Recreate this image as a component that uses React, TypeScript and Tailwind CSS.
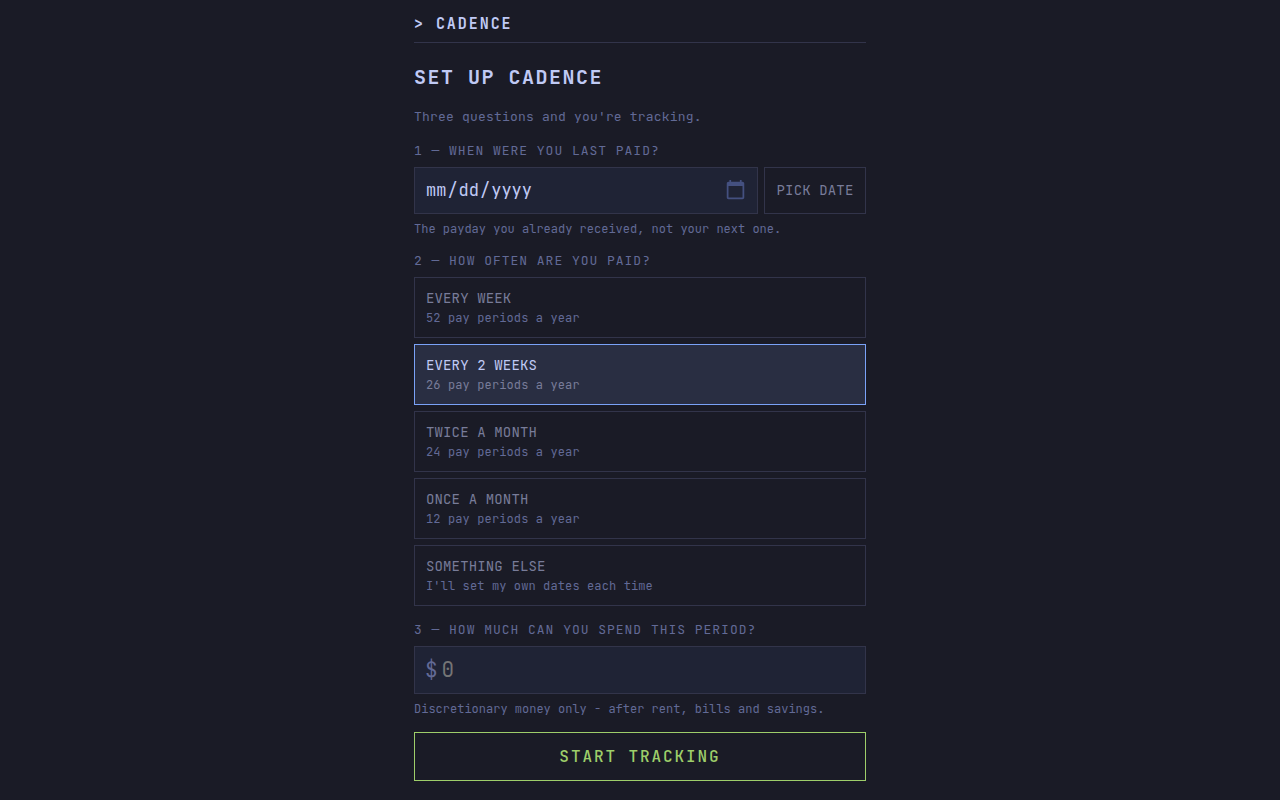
import React, { useState } from "react"

const frequencies = [
  { id: "weekly", title: "EVERY WEEK", note: "52 pay periods a year" },
  { id: "biweekly", title: "EVERY 2 WEEKS", note: "26 pay periods a year" },
  { id: "semimonthly", title: "TWICE A MONTH", note: "24 pay periods a year" },
  { id: "monthly", title: "ONCE A MONTH", note: "12 pay periods a year" },
  { id: "custom", title: "SOMETHING ELSE", note: "I'll set my own dates each time" },
]

const labelClass = "block text-[13px] leading-[17px] tracking-[0.075em] text-[#626a96]"
const hintClass = "mt-[7px] text-[12px] leading-4 text-[#626a96]"

function CalendarIcon() {
  return (
    <svg
      viewBox="0 0 24 24"
      className="pointer-events-none absolute right-3 top-3 size-[21px] text-[#445080]"
      aria-hidden="true"
    >
      <path
        fill="currentColor"
        d="M20 3h-1V1h-2v2H7V1H5v2H4c-1.1 0-2 .9-2 2v16c0 1.1.9 2 2 2h16c1.1 0 2-.9 2-2V5c0-1.1-.9-2-2-2zm0 18H4V8h16v13z"
      />
    </svg>
  )
}

export default function App() {
  const [payday, setPayday] = useState("")
  const [frequency, setFrequency] = useState("biweekly")
  const [amount, setAmount] = useState("")

  const handleSubmit = (e: React.FormEvent<HTMLFormElement>) => {
    e.preventDefault()
  }

  return (
    <div className="min-h-screen bg-[#1a1b26] font-['JetBrains_Mono','DejaVu_Sans_Mono',monospace] text-[#c0caf5]">
      <div className="mx-auto max-w-[480px] px-[14px] pb-4">
        <header className="border-b border-[#32344a] pt-[14px] pb-2">
          <a href="#" className="block text-[15px] leading-5 font-semibold tracking-[0.13em]">
            &gt; CADENCE
          </a>
        </header>

        <main>
          <h1 className="mt-5 text-[20px] leading-7 font-semibold tracking-[0.075em]">SET UP CADENCE</h1>
          <p className="mt-4 text-[13px] leading-5 tracking-[0.015em] text-[#626a96]">
            Three questions and you're tracking.
          </p>

          <form onSubmit={handleSubmit} className="mt-[15px] flex flex-col gap-[15px]">
            <div>
              <label htmlFor="payday" className={labelClass}>
                1 — WHEN WERE YOU LAST PAID?
              </label>
              <div className="mt-2 flex gap-[6px]">
                <div className="relative flex-1">
                  <input
                    id="payday"
                    type="date"
                    value={payday}
                    onChange={(e) => setPayday(e.target.value)}
                    className="h-[47px] w-full border border-[#32344a] bg-[#1f2335] px-[10px] text-[17px] outline-none focus:border-[#7aa2f7] [&::-webkit-calendar-picker-indicator]:opacity-0"
                  />
                  <CalendarIcon />
                </div>
                <button
                  type="button"
                  className="w-[102px] border border-[#32344a] text-[14px] tracking-[0.01em] text-[#787c99]"
                >
                  PICK DATE
                </button>
              </div>
              <p className={hintClass}>The payday you already received, not your next one.</p>
            </div>

            <div role="radiogroup" aria-labelledby="frequency-label">
              <span id="frequency-label" className={labelClass}>
                2 — HOW OFTEN ARE YOU PAID?
              </span>
              <div className="mt-2 flex flex-col gap-[6px]">
                {frequencies.map((f) => (
                  <label
                    key={f.id}
                    className="group relative block cursor-pointer border border-[#32344a] px-[11px] pt-[10px] pb-[9px] has-checked:border-[#7aa2f7] has-checked:bg-[#292e42]"
                  >
                    <input
                      type="radio"
                      name="frequency"
                      value={f.id}
                      checked={frequency === f.id}
                      onChange={() => setFrequency(f.id)}
                      className="sr-only"
                    />
                    <span className="block text-[14px] leading-5 tracking-[0.01em] text-[#787c99] group-has-checked:text-[#c0caf5]">
                      {f.title}
                    </span>
                    <span className="block text-[12px] leading-5 tracking-[0.01em] text-[#626a96] group-has-checked:text-[#787c99]">
                      {f.note}
                    </span>
                  </label>
                ))}
              </div>
            </div>

            <div>
              <label htmlFor="amount" className={labelClass}>
                3 — HOW MUCH CAN YOU SPEND THIS PERIOD?
              </label>
              <div className="mt-2 flex h-12 items-center gap-1 border border-[#32344a] bg-[#1f2335] px-[10px] text-[21px] focus-within:border-[#7aa2f7]">
                <span className="text-[#626a96]">$</span>
                <input
                  id="amount"
                  type="text"
                  inputMode="decimal"
                  placeholder="0"
                  value={amount}
                  onChange={(e) => setAmount(e.target.value)}
                  className="min-w-0 flex-1 bg-transparent outline-none placeholder:text-[#757575]"
                />
              </div>
              <p className={hintClass}>Discretionary money only - after rent, bills and savings.</p>
            </div>

            <button
              type="submit"
              className="h-[49px] border border-[#9ece6a] text-[16px] font-medium tracking-[0.12em] text-[#9ece6a]"
            >
              START TRACKING
            </button>
          </form>
        </main>
      </div>
    </div>
  )
}
